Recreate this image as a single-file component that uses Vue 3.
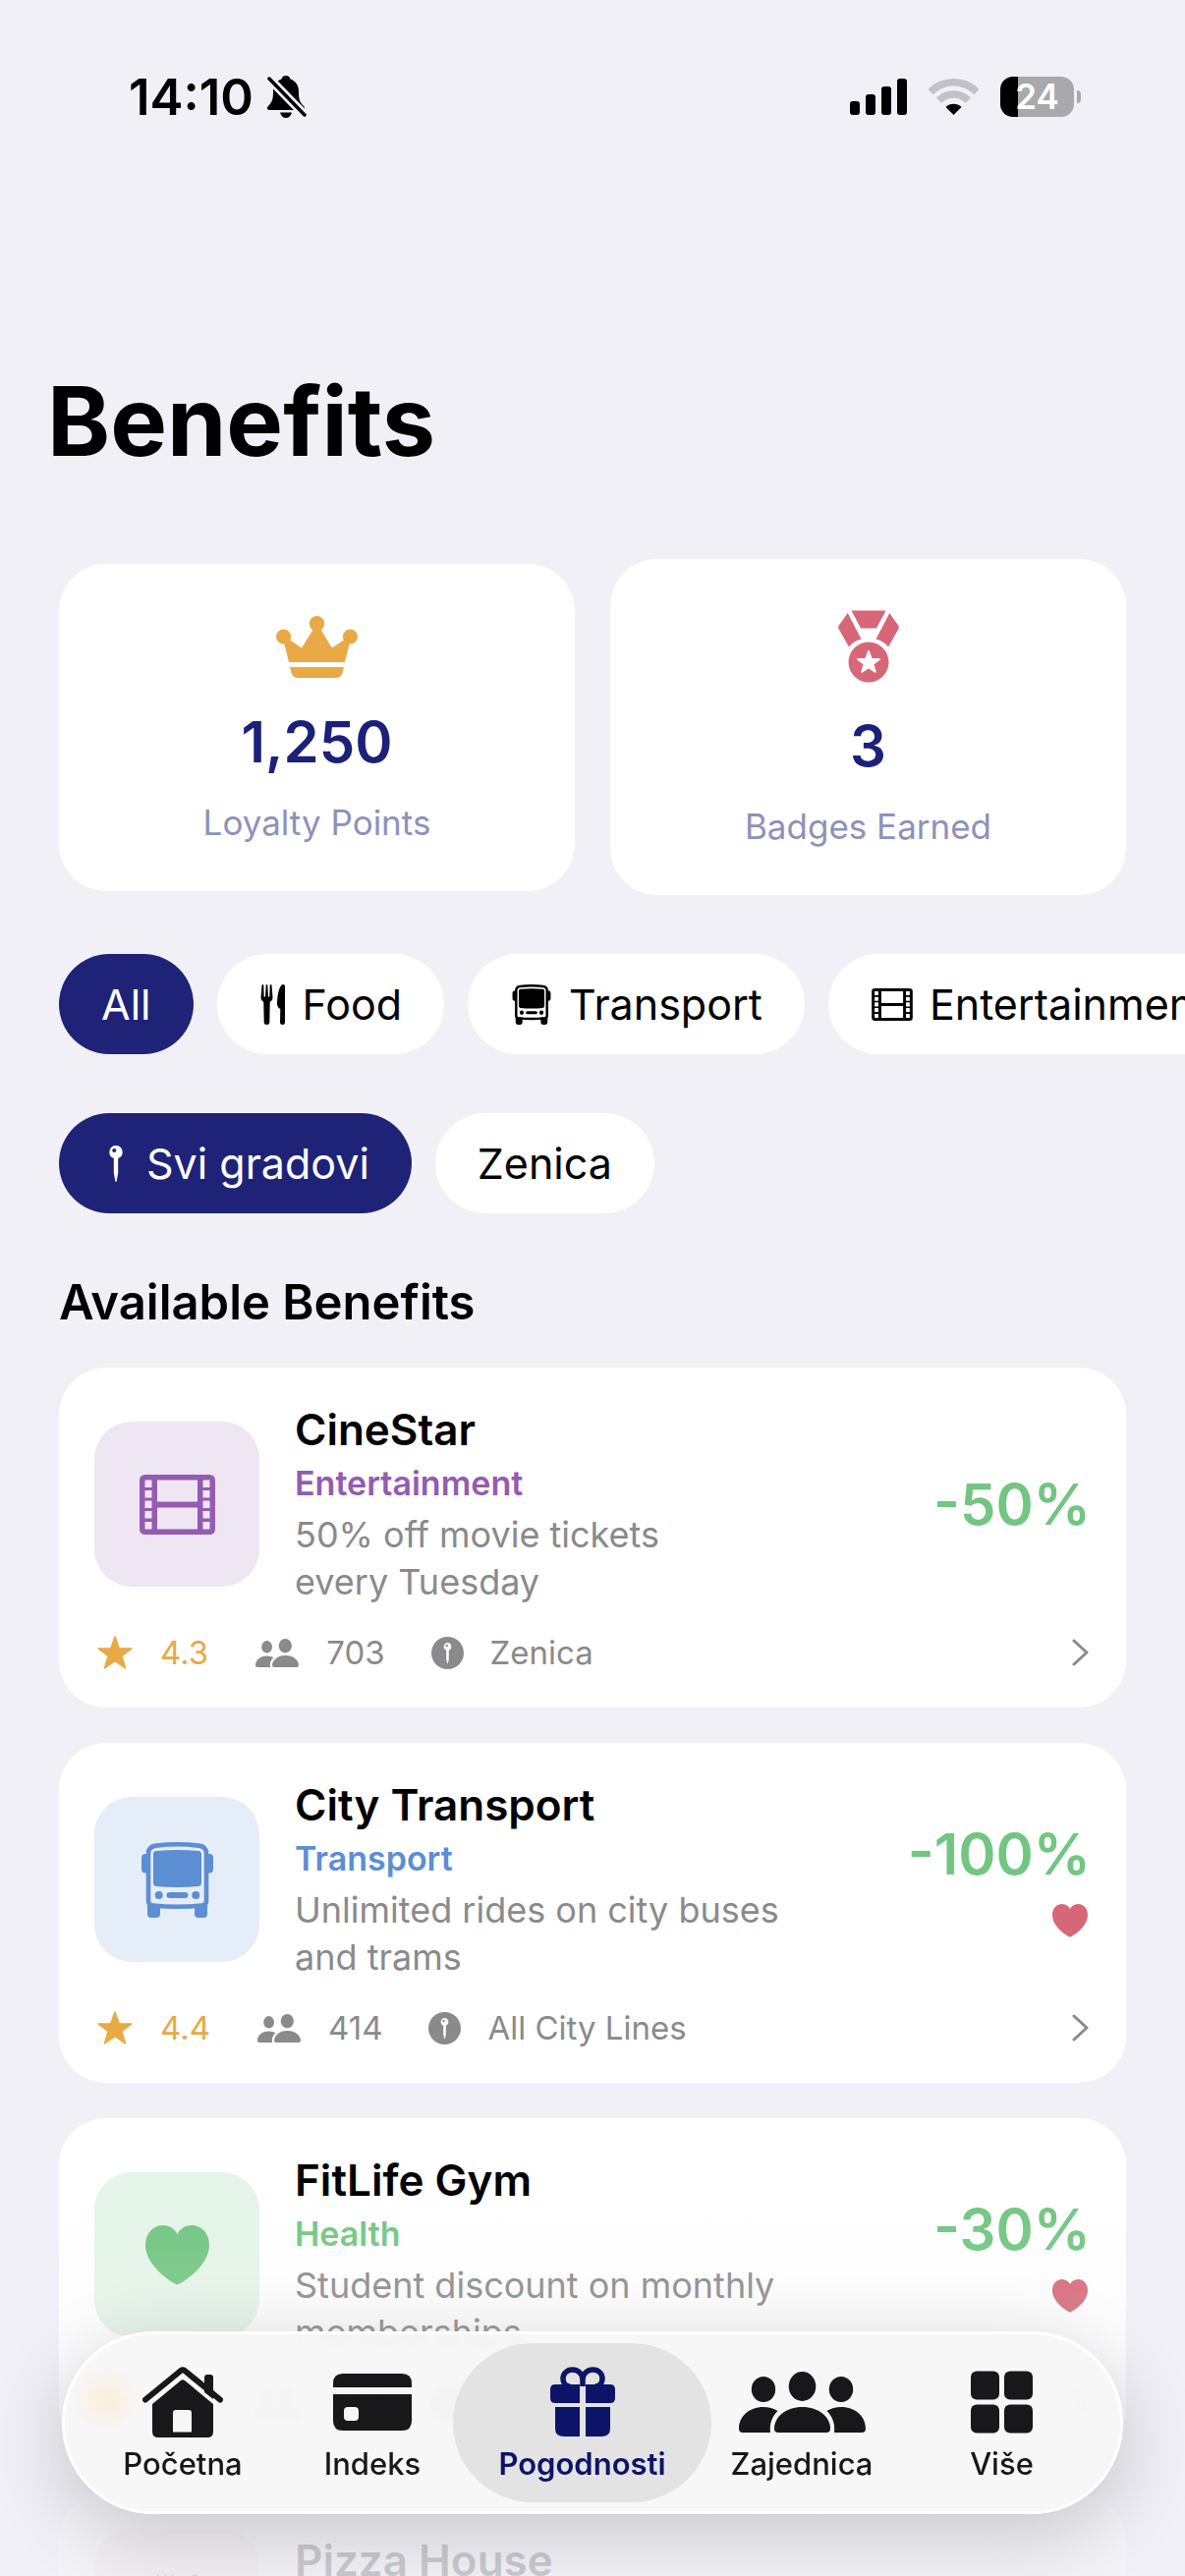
<script setup>
import { ref } from 'vue'

const categories = [
  { id: 'all', label: 'All' },
  { id: 'food', label: 'Food', icon: 'fork' },
  { id: 'transport', label: 'Transport', icon: 'bus' },
  { id: 'entertainment', label: 'Entertainment', icon: 'film' },
]
const cities = [
  { id: 'all', label: 'Svi gradovi', icon: 'pin' },
  { id: 'zenica', label: 'Zenica' },
]
const benefits = [
  {
    name: 'CineStar', kind: 'entertainment', category: 'Entertainment', icon: 'film',
    text: '50% off movie tickets\nevery Tuesday', discount: '-50%', favourite: false,
    rating: '4.3', users: '703', place: 'Zenica',
  },
  {
    name: 'City Transport', kind: 'transport', category: 'Transport', icon: 'bus',
    text: 'Unlimited rides on city buses\nand trams', discount: '-100%', favourite: true,
    rating: '4.4', users: '414', place: 'All City Lines',
  },
  {
    name: 'FitLife Gym', kind: 'health', category: 'Health', icon: 'heart',
    text: 'Student discount on monthly\nmemberships', discount: '-30%', favourite: true,
    rating: '4.6', users: '892', place: 'Zenica',
  },
  {
    name: 'Pizza House', kind: 'food', category: 'Food', icon: 'fork',
    text: 'Student menu', discount: '-20%', favourite: false,
    rating: '4.5', users: '650', place: 'Zenica',
  },
]
const tabs = [
  { id: 'home', label: 'Početna', icon: 'house' },
  { id: 'index', label: 'Indeks', icon: 'card' },
  { id: 'benefits', label: 'Pogodnosti', icon: 'gift' },
  { id: 'community', label: 'Zajednica', icon: 'community' },
  { id: 'more', label: 'Više', icon: 'grid' },
]

const category = ref('all')
const city = ref('all')
const tab = ref('benefits')
</script>

<template>
  <div class="app">
    <svg class="sprite" aria-hidden="true">
      <symbol id="bell" viewBox="0 0 41 43">
        <path d="M20 0c2.500 0 4 1.500 4.500 3.500C30 5.500 33 10 33 16c0 8 1 11 5 15 2 2 1 4-1 4H4c-3 0-4-2-2-4 4-4 5-7 5-15 0-6 3-10.500 8.500-12.500C16 1.500 17.500 0 20 0z" />
        <path d="M14 37.500h12c-1 3.500-3 5.500-6 5.500s-5-2-6-5.500z" />
        <path d="M3 3l36 37" fill="none" stroke="#f1f0f6" stroke-width="9" />
        <path d="M3 3l36 37" fill="none" stroke="currentColor" stroke-width="3.500" stroke-linecap="round" />
      </symbol>
      <symbol id="signal" viewBox="0 0 58 37">
        <rect y="23" width="10" height="14" rx="3" /><rect x="16" y="16" width="10" height="21" rx="3" />
        <rect x="32" y="8" width="10" height="29" rx="3" /><rect x="48" width="10" height="37" rx="3" />
      </symbol>
      <symbol id="wifi" viewBox="0 0 51 37">
        <g fill="none" stroke="#c1c1c6" stroke-width="7.500">
          <path d="M2 13.500a33.300 33.300 0 0 1 47 0" /><path d="M10.500 22.200a21.200 21.200 0 0 1 30 0" />
        </g>
        <path d="M25.500 37l-8-8a11.300 11.300 0 0 1 16 0z" />
      </symbol>
      <symbol id="crown" viewBox="0 0 83 63">
        <circle cx="7.600" cy="21" r="7.600" /><circle cx="41.500" cy="7.700" r="7.700" /><circle cx="75.400" cy="21" r="7.600" />
        <path d="M8 27l5 20h57l5-20-7-2-9.500 6.500q-1.500 1-2.500-.5L45 13h-7L27 31q-1 1.500-2.500.5L15 25z" />
        <path d="M14 52h55l-1.500 6q-1.500 5-7 5h-38q-5.500 0-7-5z" />
      </symbol>
      <symbol id="medal" viewBox="0 0 62 73">
        <path d="M13.500 0h35L39 18H23z" />
        <path d="M9.700 2.500L23.500 29q-8 2-12.500 8L.5 18.500q-.8-1.500 0-3z" />
        <path d="M52.300 2.500L38.500 29q8 2 12.500 8l10.500-18.500q.8-1.500 0-3z" />
        <circle cx="31" cy="52.500" r="20.500" />
        <path fill="#fff" stroke="#fff" stroke-width="2" stroke-linejoin="round" d="M31 41.500l2.700 7.700 8.200.2-6.500 5 2.300 7.900-6.700-4.700-6.700 4.700 2.300-7.900-6.500-5 8.200-.2z" />
      </symbol>
      <symbol id="fork" viewBox="0 0 25 41">
        <path d="M0 13L1 1q.2-1 1-1t.8 1L3.200 12.500h1.300L5.200 1Q5.300 0 6 0t.8 1l.7 11.500h1.300L9.200 1Q9.300 0 10 0t1 1l1 12c0 3-1.500 4-2.800 5L8.800 39q-.2 2-2.800 2t-2.800-2L2.800 18C1.500 17 0 16 0 13z" />
        <path d="M22.500 0Q24.500 0 24.500 2v37q0 2-2.500 2t-2.500-2l.3-14Q17 24 16.500 20C16.500 11 19 0 22.500 0z" />
      </symbol>
      <symbol id="bus" viewBox="0 0 73 77">
        <path fill="none" stroke="currentColor" stroke-width="4.600" d="M14.500 3.600q22-2.600 44 0 7.500 1 7.500 8V60q0 4-4.500 4.500-25 2.500-50 0Q7 64 7 60V11.600q0-7 7.500-8z" />
        <path d="M15 9q21.500-2 43 0 3 .4 3 3.500v29q0 3-3 3.500-21.500 2-43 0-3-.5-3-3.500v-29Q12 9.400 15 9z" />
        <path d="M5.500 12v19.500H4q-4 0-4-4V16q0-4 4-4zM67.500 12v19.500H69q4 0 4-4V16q0-4-4-4z" />
        <circle cx="17.700" cy="54" r="4" /><circle cx="55.300" cy="54" r="4" /><rect x="25.500" y="51" width="22" height="6" rx="3" />
        <path d="M6 63h13v10q0 4-4 4h-5q-4 0-4-4zM54 63h13v10q0 4-4 4h-5q-4 0-4-4z" />
      </symbol>
      <symbol id="film" viewBox="0 0 77 61">
        <path fill-rule="evenodd" d="M6 0h65q6 0 6 6v49q0 6-6 6H6q-6 0-6-6V6q0-6 6-6zM18 5.500h41v22H18zM18 33.500h41v22H18zM5.500 5.500h7V13h-7zM5.500 16h7v7.500h-7zM5.500 26.500h7V34h-7zM5.500 37h7v7.500h-7zM5.500 48h7v7.500h-7zM64.500 5.500h7V13h-7zM64.500 16h7v7.500h-7zM64.500 26.500h7V34h-7zM64.500 37h7v7.500h-7zM64.500 48h7v7.500h-7z" />
      </symbol>
      <symbol id="pin" viewBox="0 0 14 37">
        <path fill-rule="evenodd" d="M7 0a6.700 6.700 0 0 1 2.200 13V28L7.600 36.500q-.6 1-1.200 0L4.800 28V13A6.700 6.700 0 0 1 7 0zM5.200 3a2 2 0 1 0 .1 0z" />
      </symbol>
      <symbol id="pin-circle" viewBox="0 0 33 33">
        <path fill-rule="evenodd" d="M16.500 0a16.500 16.500 0 1 1 0 33 16.500 16.500 0 0 1 0-33zM16.500 6a4 4 0 0 0-1.300 7.700V23l1 4q.3.500.6 0l1-4v-9.300A4 4 0 0 0 16.500 6z" />
        <circle cx="15.600" cy="9" r="1.200" />
      </symbol>
      <symbol id="heart" viewBox="0 0 65 61">
        <path d="M32.500 60.500C28 59 0 42 0 20 0 8 8 0 18 0c7 0 12 4 14.500 9C35 4 40 0 47 0c10 0 18 8 18 20 0 22-28 39-32.500 40.500z" />
      </symbol>
      <symbol id="star" viewBox="0 0 36 34">
        <path stroke="currentColor" stroke-width="1.500" stroke-linejoin="round" d="M18 1l4.200 11.700 12.800.2-10.200 7.700 3.800 12.400L18 25.600 7.400 33l3.800-12.400L1 12.900l12.800-.2z" />
      </symbol>
      <symbol id="people" viewBox="0 0 44 29">
        <ellipse cx="11.600" cy="8.300" rx="5.400" ry="6.200" /><ellipse cx="30.300" cy="7.200" rx="6.600" ry="7.200" />
        <path d="M19 29q-2 0-2-2c0-5 5.500-10 13.500-10S44 22 44 27q0 2-2 2z" />
        <path d="M2 29q-2 0-2-2c0-5 4.500-9.500 11.500-9.500q4 0 7 1.500c-3 2.500-4 6-3.500 10z" />
      </symbol>
      <symbol id="chevron" viewBox="0 0 17 28">
        <path d="M2 2l13 12L2 26" fill="none" stroke="currentColor" stroke-width="3" stroke-linecap="round" stroke-linejoin="round" />
      </symbol>
      <symbol id="house" viewBox="0 0 82 72">
        <path fill="none" stroke="currentColor" stroke-width="6" stroke-linecap="round" stroke-linejoin="round" d="M3 33.500L39 4q2-1.500 4 0l36 29.500" />
        <path d="M63 26V11q0-3 3-3h3q3 0 3 3v22z" />
        <path fill-rule="evenodd" d="M39 14q2-1.500 4 0l29 24v28q0 6-6 6H16q-6 0-6-6V38zM34 44q-3 0-3 3v19.500h19V47q0-3-3-3z" />
      </symbol>
      <symbol id="card" viewBox="0 0 80 58">
        <path d="M10 0h60q10 0 10 10v4H0v-4Q0 0 10 0z" />
        <path fill-rule="evenodd" d="M0 21h80v27q0 10-10 10H10Q0 58 0 48zM15 34q-4 0-4 4v6q0 4 4 4h7q4 0 4-4v-6q0-4-4-4z" />
      </symbol>
      <symbol id="gift" viewBox="0 0 66 72">
        <path fill="none" stroke="currentColor" stroke-width="5.500" d="M33 20v-7C33 7 28 3 22.500 3S13 7 13 12s3.500 8 7.500 8M33 20v-7c0-6 5-10 10.500-10S53 7 53 12s-3.500 8-7.500 8" />
        <path d="M5 18h25v19H5q-5 0-5-5v-9q0-5 5-5zM36 18h25q5 0 5 5v9q0 5-5 5H36zM5 41h25v30H14q-9 0-9-8zM36 41h25v22q0 8-9 8H36z" />
      </symbol>
      <symbol id="community" viewBox="0 0 129 62">
        <ellipse cx="64.500" cy="15" rx="13.800" ry="15" /><ellipse cx="25" cy="18" rx="12.200" ry="13" /><ellipse cx="104" cy="18" rx="12.200" ry="13" />
        <path d="M40 62q-4 0-4-4c0-12 12-22 28.500-22S93 46 93 58q0 4-4 4z" />
        <path d="M4 62q-4 0-4-4c0-12 10-22 25-22q8 0 14.500 4c-6 6-8.500 13-7.500 22z" />
        <path d="M125 62q4 0 4-4c0-12-10-22-25-22q-8 0-14.500 4c6 6 8.500 13 7.500 22z" />
      </symbol>
      <symbol id="grid" viewBox="0 0 63 63">
        <rect width="29" height="29" rx="6" /><rect x="34" width="29" height="29" rx="6" />
        <rect y="34" width="29" height="29" rx="6" /><rect x="34" y="34" width="29" height="29" rx="6" />
      </symbol>
    </svg>

    <div class="status">
      <time class="clock">14:10</time>
      <svg class="icon bell"><use href="#bell" /></svg>
      <svg class="icon signal"><use href="#signal" /></svg>
      <svg class="icon wifi"><use href="#wifi" /></svg>
      <span class="battery">24</span>
      <span class="battery-tip"></span>
    </div>

    <main class="content">
      <h1>Benefits</h1>

      <section class="stats">
        <div class="stat">
          <svg class="icon crown"><use href="#crown" /></svg>
          <strong>1,250</strong>
          <span>Loyalty Points</span>
        </div>
        <div class="stat">
          <svg class="icon medal"><use href="#medal" /></svg>
          <strong>3</strong>
          <span>Badges Earned</span>
        </div>
      </section>

      <div class="chips">
        <button
          v-for="c in categories" :key="c.id" type="button"
          class="chip" :class="{ active: category === c.id }" @click="category = c.id"
        >
          <svg v-if="c.icon" class="icon" :class="c.icon"><use :href="'#' + c.icon" /></svg>{{ c.label }}
        </button>
      </div>
      <div class="chips">
        <button
          v-for="c in cities" :key="c.id" type="button"
          class="chip" :class="{ active: city === c.id }" @click="city = c.id"
        >
          <svg v-if="c.icon" class="icon" :class="c.icon"><use :href="'#' + c.icon" /></svg>{{ c.label }}
        </button>
      </div>

      <h2>Available Benefits</h2>
      <article v-for="b in benefits" :key="b.name" class="benefit" :class="b.kind">
        <div class="summary">
          <div class="tile"><svg class="icon" :class="b.icon"><use :href="'#' + b.icon" /></svg></div>
          <div class="info">
            <h3>{{ b.name }}</h3>
            <p class="category">{{ b.category }}</p>
            <p class="text">{{ b.text }}</p>
          </div>
          <div class="deal">
            <span class="discount">{{ b.discount }}</span>
            <svg v-if="b.favourite" class="icon favourite"><use href="#heart" /></svg>
          </div>
        </div>
        <div class="meta">
          <span class="fact rating"><svg class="icon star"><use href="#star" /></svg>{{ b.rating }}</span>
          <span class="fact"><svg class="icon people"><use href="#people" /></svg>{{ b.users }}</span>
          <span class="fact"><svg class="icon place"><use href="#pin-circle" /></svg>{{ b.place }}</span>
          <svg class="icon chevron"><use href="#chevron" /></svg>
        </div>
      </article>
    </main>

    <div class="fade"></div>
    <nav class="tabs">
      <button
        v-for="t in tabs" :key="t.id" type="button"
        class="tab" :class="{ active: tab === t.id }" @click="tab = t.id"
      >
        <svg class="icon" :class="t.icon"><use :href="'#' + t.icon" /></svg>
        <span>{{ t.label }}</span>
      </button>
    </nav>
  </div>
</template>

<style>
body {
  background: #f1f0f6;
}
</style>

<style scoped>
.app {
  position: relative;
  height: 100vh;
  overflow: hidden;
  background: #f1f0f6;
  color: #000;
  font-family: Inter, "Liberation Sans", sans-serif;
}
.app * {
  box-sizing: border-box;
}
button {
  border: 0;
  font: inherit;
  color: inherit;
  cursor: pointer;
}
h1, h2, h3, p {
  margin: 0;
}
.sprite {
  display: none;
}
.icon {
  display: block;
  flex: none;
  fill: currentColor;
}

.status {
  display: flex;
  align-items: center;
  height: 196px;
  padding: 0 106px 0 131px;
}
.clock {
  font-size: 51px;
  font-weight: 600;
}
.bell { width: 41px; height: 43px; margin-left: 13px; }
.signal { width: 58px; height: 37px; margin-left: auto; }
.wifi { width: 51px; height: 37px; margin-left: 22px; }
.battery {
  width: 75px;
  height: 41px;
  margin-left: 22px;
  border-radius: 13px;
  background: linear-gradient(90deg, #000 18px, #a9a9ab 18px);
  color: #fff;
  font-size: 35px;
  font-weight: 600;
  line-height: 41px;
  text-align: center;
}
.battery-tip {
  width: 4px;
  height: 13px;
  margin-left: 3px;
  border-radius: 0 4px 4px 0;
  background: #a9a9ab;
}

.content {
  padding: 173px 60px 0;
}
h1 {
  margin: 0 -12px;
  font-size: 97px;
  font-weight: 700;
  line-height: 120px;
}
.stats {
  display: grid;
  grid-template-columns: 1fr 1fr;
  align-items: center;
  gap: 36px;
  margin-top: 80px;
}
.stat {
  display: flex;
  flex-direction: column;
  align-items: center;
  gap: 24px;
  padding: 48px;
  border-radius: 48px;
  background: #fff;
}
.crown { width: 83px; height: 73px; color: #e9a945; }
.medal { width: 62px; height: 82px; padding: 4px 0; color: #d76777; }
.stat strong {
  color: #1b2178;
  font-size: 58px;
  font-weight: 600;
  line-height: 72px;
}
.stat span {
  color: #8e91bb;
  font-size: 35px;
  line-height: 44px;
}

.chips {
  display: flex;
  gap: 24px;
  margin: 60px -60px 0;
  padding: 0 60px;
  overflow: hidden;
}
.chip {
  display: flex;
  flex: none;
  align-items: center;
  gap: 16px;
  height: 102px;
  padding: 0 43px;
  border-radius: 51px;
  background: #fff;
  font-size: 43px;
  line-height: 54px;
}
.chip.active {
  background: #1e2378;
  color: #fff;
}
.chip .fork { width: 28px; height: 41px; }
.chip .bus { width: 44px; height: 41px; }
.chip .film { width: 44px; height: 33px; }
.chip .pin { width: 30px; height: 37px; }

h2 {
  margin: 60px 0 36px;
  font-size: 49px;
  font-weight: 600;
  line-height: 61px;
}
.benefit {
  margin-bottom: 36px;
  padding: 36px;
  border-radius: 48px;
  background: #fff;
}
.entertainment { --tone: #935cb1; --tint: #eee6f3; }
.transport { --tone: #5c8ed4; --tint: #e5edf8; }
.health { --tone: #72c681; --tint: #e5f5e9; }
.food { --tone: #d76777; --tint: #f8e6e8; }
.summary {
  display: flex;
  align-items: center;
  gap: 36px;
}
.tile {
  display: grid;
  flex: none;
  place-items: center;
  width: 168px;
  height: 168px;
  border-radius: 38px;
  background: var(--tint);
  color: var(--tone);
}
.tile .film { width: 77px; height: 61px; }
.tile .bus { width: 73px; height: 77px; }
.tile .heart { width: 65px; height: 61px; }
.tile .fork { width: 46px; height: 76px; }
.info {
  flex: 1;
}
h3 {
  font-size: 44px;
  font-weight: 600;
  line-height: 54px;
}
.category {
  margin: 7px 0;
  color: var(--tone);
  font-size: 34px;
  font-weight: 600;
  line-height: 42px;
}
.text {
  color: #8a8a8c;
  font-size: 36px;
  line-height: 48px;
  white-space: pre-line;
}
.deal {
  display: flex;
  flex-direction: column;
  align-items: flex-end;
  gap: 12px;
}
.discount {
  color: #72c681;
  font-size: 58px;
  font-weight: 600;
  line-height: 72px;
}
.favourite {
  width: 36px;
  height: 40px;
  margin-right: 3px;
  color: #d76777;
}
.meta {
  display: flex;
  align-items: center;
  gap: 45px;
  height: 40px;
  margin-top: 28px;
  color: #8a8a8c;
  font-size: 33px;
  line-height: 40px;
}
.fact {
  display: flex;
  align-items: center;
  gap: 25px;
}
.rating { color: #e9a945; }
.star { width: 42px; height: 34px; }
.people { width: 50px; height: 29px; }
.place { width: 37px; height: 33px; }
.chevron { width: 21px; height: 28px; margin-left: auto; }

.fade {
  position: absolute;
  inset: auto 0 0;
  height: 390px;
  background: linear-gradient(rgba(241, 240, 246, 0), rgba(241, 240, 246, 0.2) 40%, rgba(241, 240, 246, 0.84) 85%);
  pointer-events: none;
}
.tabs {
  position: absolute;
  right: 63px;
  bottom: 63px;
  left: 63px;
  display: grid;
  grid-template-columns: 222fr 164fr 263fr 184fr 223fr;
  padding: 9px;
  border: 3px solid #fff;
  border-radius: 93px;
  background:
    radial-gradient(circle at 42px 66px, rgba(253, 236, 210, 0.8), rgba(253, 240, 220, 0) 34px) padding-box,
    rgba(247, 247, 248, 0.94) padding-box;
  box-shadow: 0 20px 80px rgba(0, 0, 0, 0.19);
  backdrop-filter: blur(3px);
}
.tab {
  display: flex;
  flex-direction: column;
  align-items: center;
  gap: 9px;
  height: 162px;
  padding: 24px 0 0;
  border-radius: 81px;
  background: none;
  color: #18181a;
  font-size: 31px;
  font-weight: 500;
  line-height: 36px;
}
.tab.active {
  background: #e3e3e4;
  color: #0d1468;
  font-weight: 600;
}
.tab .icon { height: 72px; }
.house { width: 82px; }
.card { width: 80px; padding: 7px 0; }
.gift { width: 66px; }
.community { width: 129px; padding: 5px 0; }
.grid { width: 63px; padding: 4px 0; }
</style>
